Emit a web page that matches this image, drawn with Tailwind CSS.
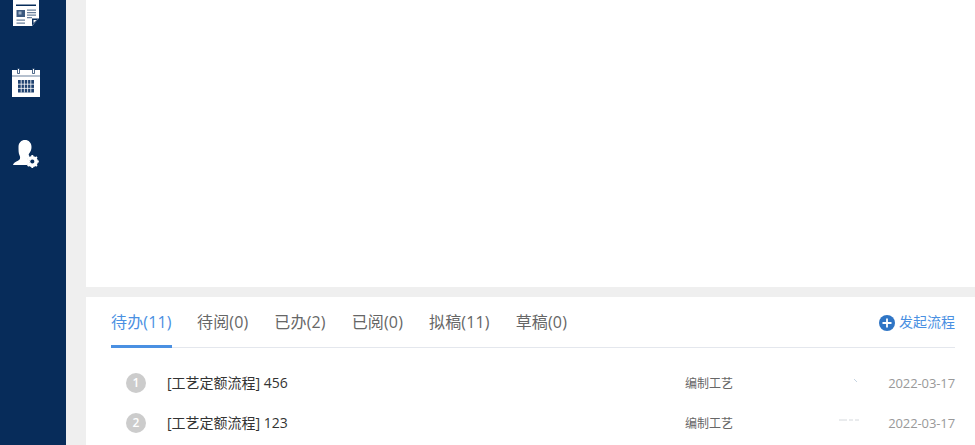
<!DOCTYPE html>
<html lang="zh">
<head>
  <meta charset="UTF-8" />
  <title>工作台</title>
  <script src="https://cdn.jsdelivr.net/npm/@tailwindcss/browser@4"></script>
</head>
<body class="h-[445px] w-[975px] overflow-hidden bg-[#efefef] font-['Open_Sans','Noto_Sans_CJK_SC',sans-serif]">
  <div class="flex h-full">
    <!-- 侧边栏 -->
    <aside class="w-[66px] shrink-0 bg-[#072c5a]">
      <div class="flex flex-col items-center pr-[14px]">
        <svg class="block h-[26px] w-[26px]" viewBox="0 0 26 26">
          <path d="M0 0h26v18l-7 8H0z" fill="#fff"/>
          <path d="M3 4.500h20v1.500H3z" fill="#072c5a"/>
          <path d="M3.500 10h8.500v7H3.500z" fill="#3c5a80"/>
          <path d="M5.500 11.500h3v3h-3z" fill="#9fb0c4"/>
          <path d="M14 9.500h9v1.200H14zM14 12h9v1.200H14zM14 14.500h9v1.200H14zM14 17h5v1.200H14zM3.500 19.500h8.500v1.200H3.500zM3.500 22.500h8.500v1.200H3.500z" fill="#6b819c"/>
          <path d="M19 25.500v-7h6.500z" fill="#072c5a"/>
          <path d="M20.500 23v-3h3z" fill="#fff"/>
        </svg>
        <svg class="mt-[42px] block h-[29px] w-[28px]" viewBox="0 0 28 29">
          <path d="M0 2h28v27H0z" fill="#fff"/>
          <path d="M0 7.500h28v1H0z" fill="#6b819c"/>
          <path d="M5.500 .5h2v5h-2zM20.500 .5h2v5h-2z" fill="#fff" stroke="#072c5a" stroke-width=".7"/>
          <path d="M6 12h16v12.500H6z" fill="#1f4270"/>
          <path d="M9.200 12v12.500M12.400 12v12.500M15.600 12v12.500M18.800 12v12.500M6 16.200h16M6 20.400h16" stroke="#fff" stroke-width=".8"/>
        </svg>
        <svg class="mt-[43px] block h-[28px] w-[26px]" viewBox="0 0 26 28">
          <path d="M12 0c3.700 0 6.500 2.700 6.500 7 0 2.700-1 5-2.500 6.800-.6 1.200-.2 2 .7 2.500-2.200 1.700-3 4.700-1.700 8.700H.8c-.6 0-.9-.5-.5-1 1.700-2.300 4.500-2.900 6-4.200 1-1 1-2.800.3-4.300C5.500 13.500 5.500 10 5.500 7 5.500 2.700 8.300 0 12 0z" fill="#fff"/>
          <circle cx="19.300" cy="21.500" r="4.200" fill="none" stroke="#fff" stroke-width="2.800"/>
          <path d="M19.300 15v13M12.800 21.500h13M14.700 16.900l9.200 9.200M23.900 16.900l-9.200 9.200" stroke="#fff" stroke-width="1.900"/>
          <circle cx="19.300" cy="21.500" r="2" fill="#072c5a"/>
        </svg>
      </div>
    </aside>

    <main class="ml-[20px] flex min-w-0 flex-1 flex-col gap-[10px]">
      <div class="h-[287px] shrink-0 bg-white"></div>

      <!-- 流程面板 -->
      <section class="flex-1 bg-white pr-[20px] pl-[25px]">
        <div class="flex h-[51px] items-stretch justify-between border-b border-[#e4e7ed]">
          <div class="flex gap-[26px] text-[16px] tracking-[0.15px] text-[#666]">
            <a class="mr-[-1px] flex h-[51px] w-[61px] items-center border-b-[3px] border-[#4a90e2] pt-[2px] text-[#4a90e2]">待办(11)</a>
            <a class="flex h-[51px] items-center pb-[1px]">待阅(0)</a>
            <a class="flex h-[51px] items-center pb-[1px]">已办(2)</a>
            <a class="flex h-[51px] items-center pb-[1px]">已阅(0)</a>
            <a class="flex h-[51px] items-center pb-[1px]">拟稿(11)</a>
            <a class="flex h-[51px] items-center pb-[1px]">草稿(0)</a>
          </div>
          <a class="flex items-center gap-[4px] pb-[2px] text-[14px] text-[#4a90e2]">
            <svg class="mt-[3px] h-[16px] w-[16px]" viewBox="0 0 16 16">
              <circle cx="8" cy="8" r="8" fill="#2f75c5"/>
              <path d="M8 3.500v9M3.500 8h9" stroke="#fff" stroke-width="1.800"/>
            </svg>
            发起流程
          </a>
        </div>
        <ul class="pt-[15px]">
          <li class="flex h-[40px] items-center">
            <span class="ml-[15px] flex h-[20px] w-[20px] items-center justify-center rounded-full bg-[#ccc] text-[12px] font-semibold text-white">1</span>
            <span class="ml-[21px] w-[518px] pb-[2px] text-[14px] text-[#333]">[工艺定额流程] 456</span>
            <span class="w-[150px] pt-[2px] text-[12px] text-[#666]">编制工艺</span>
            <svg class="h-[12px] w-[30px]" viewBox="0 0 30 12"><path d="M19 2l3 3" stroke="#c5d3e0" stroke-width="1"/></svg>
            <span class="ml-auto pt-[1px] text-[13px] tracking-[-0.1px] text-[#999]">2022-03-17</span>
          </li>
          <li class="flex h-[40px] items-center">
            <span class="ml-[15px] flex h-[20px] w-[20px] items-center justify-center rounded-full bg-[#ccc] text-[12px] font-semibold text-white">2</span>
            <span class="ml-[21px] w-[518px] pb-[2px] text-[14px] text-[#333]">[工艺定额流程] 123</span>
            <span class="w-[150px] pt-[2px] text-[12px] text-[#666]">编制工艺</span>
            <svg class="h-[12px] w-[30px]" viewBox="0 0 30 12"><path d="M4 3h8M14 3h4M20 3h4" stroke="#d4d8dc" stroke-width="1"/></svg>
            <span class="ml-auto pt-[1px] text-[13px] tracking-[-0.1px] text-[#999]">2022-03-17</span>
          </li>
        </ul>
      </section>
    </main>
  </div>
</body>
</html>
